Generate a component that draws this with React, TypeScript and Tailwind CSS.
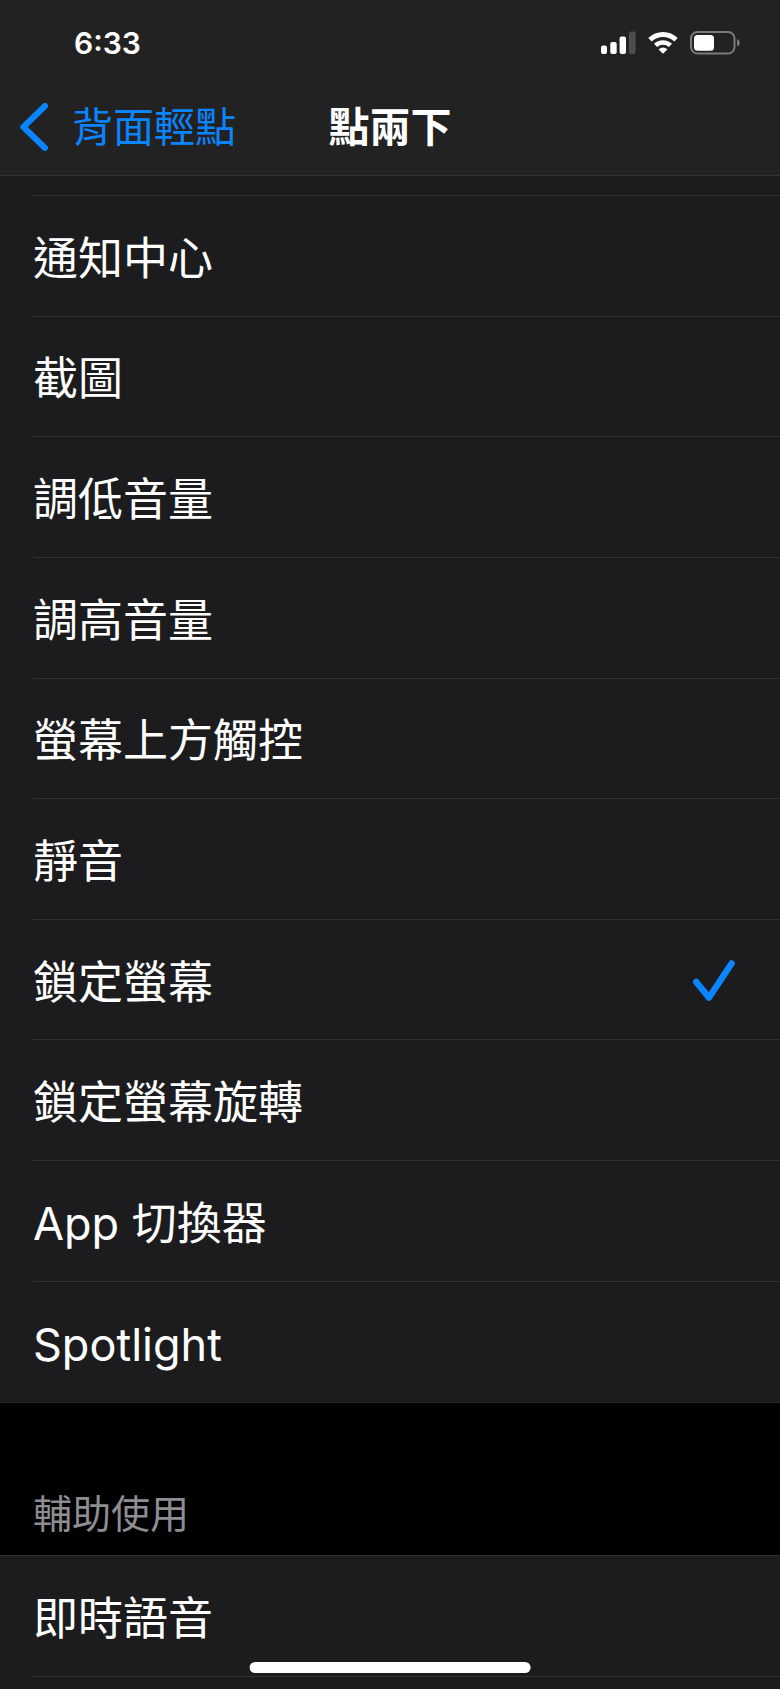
import React, { useState } from "react";

const systemActions = [
  "通知中心",
  "截圖",
  "調低音量",
  "調高音量",
  "螢幕上方觸控",
  "靜音",
  "鎖定螢幕",
  "鎖定螢幕旋轉",
  "App 切換器",
  "Spotlight",
];

const accessibilityActions = ["即時語音"];

const StatusBar = () => {
  return (
    <div className="flex h-20 items-center justify-between pt-1.5 pr-10 pl-[74px]">
      <span className="text-[30px] leading-9 font-semibold">6:33</span>
      <div className="flex items-center gap-3">
        <svg width="36" height="24" viewBox="0 0 36 24" fill="#fff" aria-hidden="true">
          <rect x="1" y="14.5" width="6" height="8.5" rx="2" />
          <rect x="10.3" y="11" width="6.4" height="12" rx="2" />
          <rect x="19.6" y="5.5" width="6.4" height="17.5" rx="2" />
          <rect x="29" y="0.5" width="6.6" height="22.5" rx="2" fill="#4d4d4d" />
        </svg>
        <svg width="30" height="24" viewBox="0 0 30 24" aria-hidden="true">
          <path d="M2 8.7A18.6 18.6 0 0 1 28 8.7" fill="none" stroke="#fff" strokeWidth="5" />
          <path d="M7.6 14.4A10.7 10.7 0 0 1 22.4 14.4" fill="none" stroke="#fff" strokeWidth="4.6" />
          <path d="M15 22.7L10.6 18.4A6.3 6.3 0 0 1 19.4 18.4Z" fill="#fff" />
        </svg>
        <svg width="50" height="24" viewBox="0 0 50 24" aria-hidden="true">
          <rect x="1" y="1" width="43.5" height="21.5" rx="6.5" fill="none" stroke="#7a7a7a" strokeWidth="2" />
          <rect x="4" y="4" width="20" height="15.8" rx="3.5" fill="#fff" />
          <path d="M47 8C50.7 9.5 50.7 14 47 15.5Z" fill="#7a7a7a" />
        </svg>
      </div>
    </div>
  );
};

const NavBar = () => {
  return (
    <nav className="grid h-[95px] grid-cols-[1fr_auto_1fr] items-center pb-0.5 text-[41px] leading-[50px]">
      <a href="#back" className="flex items-center gap-6 pl-5 text-[#0a84ff]">
        <svg width="28" height="48" viewBox="0 0 28 48" aria-hidden="true">
          <path
            d="M25 3L3.4 24L25 45"
            fill="none"
            stroke="currentColor"
            strokeWidth="6"
            strokeLinecap="round"
            strokeLinejoin="round"
          />
        </svg>
        背面輕點
      </a>
      <h1 className="font-semibold">點兩下</h1>
    </nav>
  );
};

const ActionRow = ({ name, checked, onSelect }: any) => {
  return (
    <label className="group relative flex min-h-[110px] flex-1 cursor-pointer pl-[33px]">
      <input type="radio" name="action" className="sr-only" checked={checked} onChange={() => onSelect(name)} />
      <span className="flex flex-1 items-center justify-between border-b border-[#323235] pt-0.5 pr-[45px] group-last:border-transparent">
        <span className="pt-1">{name}</span>
        {checked && (
          <svg width="42" height="42" viewBox="0 0 42 42" className="text-[#0a84ff]" aria-hidden="true">
            <path
              d="M3.2 22L16 37.6L38.6 3.4"
              fill="none"
              stroke="currentColor"
              strokeWidth="6.4"
              strokeLinecap="round"
              strokeLinejoin="round"
            />
          </svg>
        )}
      </span>
    </label>
  );
};

const App = () => {
  const [selected, setSelected] = useState("鎖定螢幕");

  return (
    <div className="flex min-h-screen flex-col bg-[#1c1c1e] font-[Inter,'Noto_Sans_CJK_TC',sans-serif] text-[45px] leading-[54px] text-white">
      <header className="border-b border-[#323234] bg-[#222222]">
        <StatusBar />
        <NavBar />
      </header>

      <main className="flex flex-1 flex-col">
        {/* tail of the row scrolled under the header */}
        <div className="ml-[33px] h-5 border-b border-[#323235]" />
        <section className="flex flex-[10] flex-col border-b border-[#29292c]">
          {systemActions.map((name) => (
            <ActionRow key={name} name={name} checked={selected === name} onSelect={setSelected} />
          ))}
        </section>

        <h2 className="bg-black pt-[86px] pb-4 pl-[33px] text-[39px] leading-[50px] text-[#8d8d92]">輔助使用</h2>

        <section className="flex flex-1 flex-col border-t border-[#323235]">
          {accessibilityActions.map((name) => (
            <ActionRow key={name} name={name} checked={selected === name} onSelect={setSelected} />
          ))}
          <div className="h-3" />
        </section>
      </main>

      <div className="fixed bottom-4 left-1/2 h-[11px] w-[36%] -translate-x-1/2 rounded-full bg-white" />
    </div>
  );
};

export default App;
